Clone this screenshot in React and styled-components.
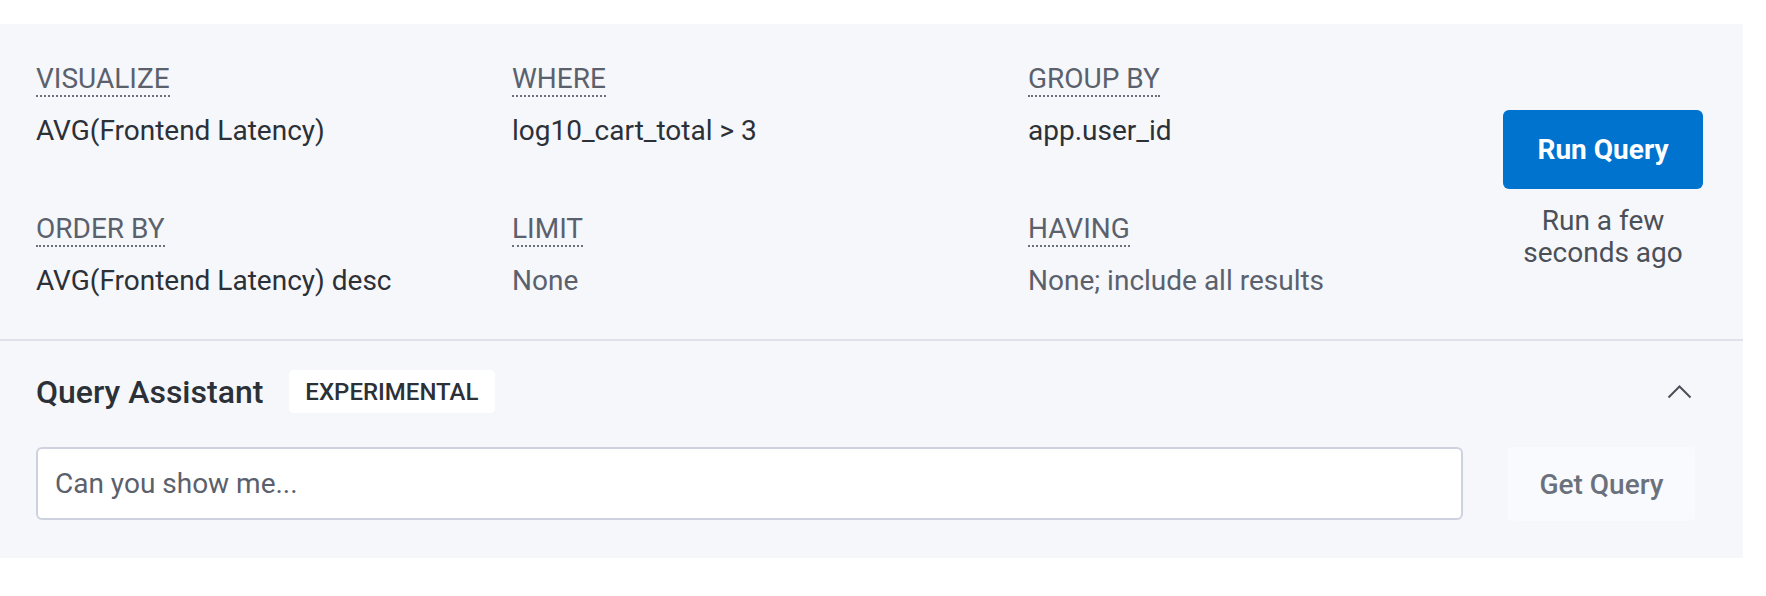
import styled, { createGlobalStyle } from "styled-components";

const GlobalStyle = createGlobalStyle`
  html, body {
    margin: 0;
    padding: 0;
    background: #ffffff;
    font-family: Roboto, "Liberation Sans", Arial, sans-serif;
  }
`

const Page = styled.div`
  padding-top: 24px;
`

const Panel = styled.div`
  width: 1743px;
  background: #f5f7fb;
`

const Upper = styled.div`
  display: grid;
  grid-template-columns: 476px 516px 475px 200px;
  grid-template-rows: auto auto;
  row-gap: 66px;
  padding: 41px 40px 40px 36px;
  border-bottom: 2px solid #dfe2e8;
`

const Field = styled.div`
  display: flex;
  flex-direction: column;
  align-items: flex-start;
`

const Label = styled.span`
  display: inline-block;
  font-size: 28px;
  line-height: 28px;
  padding-bottom: 2px;
  color: #5b616c;
  border-bottom: 2px dotted #6b717c;
`

const Value = styled.div`
  margin-top: 16px;
  font-size: 28px;
  line-height: 36px;
  color: ${(p) => (p.$muted ? "#5b616c" : "#2c3037")};
`

const RunCol = styled.div`
  grid-column: 4;
  grid-row: 1 / span 2;
  display: flex;
  flex-direction: column;
  align-items: center;
  padding-top: 45px;
`

const RunButton = styled.button`
  width: 200px;
  height: 79px;
  border: none;
  border-radius: 6px;
  background: #0073cf;
  color: #ffffff;
  font-family: inherit;
  font-size: 28px;
  font-weight: 700;
  cursor: pointer;
`

const RunNote = styled.div`
  margin-top: 16px;
  font-size: 28px;
  line-height: 32px;
  color: #4b5058;
  text-align: center;
`

const Lower = styled.div`
  padding: 29px 48px 37px 36px;
`

const HeaderRow = styled.div`
  display: flex;
  align-items: center;
  height: 43px;
`

const Title = styled.h3`
  margin: 0;
  font-size: 32px;
  font-weight: 500;
  color: #2c3037;
`

const Badge = styled.span`
  margin-left: 26px;
  height: 43px;
  display: inline-flex;
  align-items: center;
  padding: 0 17px 0 16px;
  background: #ffffff;
  border-radius: 5px;
  font-size: 24px;
  font-weight: 500;
  color: #2c3037;
`

const Collapse = styled.button`
  margin-left: auto;
  margin-right: 3px;
  background: none;
  border: none;
  padding: 0;
  display: flex;
  cursor: pointer;
`

const InputRow = styled.div`
  display: flex;
  gap: 45px;
  margin-top: 34px;
`

const Prompt = styled.input`
  flex: 1;
  height: 73px;
  box-sizing: border-box;
  border: 2px solid #cdd2de;
  border-radius: 6px;
  background: #ffffff;
  padding: 0 17px;
  font-family: inherit;
  font-size: 28px;
  color: #2c3037;
  outline: none;
  &::placeholder {
    color: #5b616c;
  }
`

const GetButton = styled.button`
  width: 187px;
  height: 74px;
  border: none;
  border-radius: 5px;
  background: #f9fafd;
  color: #6b717c;
  font-family: inherit;
  font-size: 28px;
  font-weight: 500;
`

const fields = [
  { label: "VISUALIZE", value: "AVG(Frontend Latency)" },
  { label: "WHERE", value: "log10_cart_total > 3" },
  { label: "GROUP BY", value: "app.user_id" },
  { label: "ORDER BY", value: "AVG(Frontend Latency) desc" },
  { label: "LIMIT", value: "None", muted: true },
  { label: "HAVING", value: "None; include all results", muted: true },
]

const App = () => {
  return (
    <Page>
      <GlobalStyle />
      <Panel>
        <Upper>
          {fields.slice(0, 3).map((f) => (
            <Field key={f.label}>
              <Label>{f.label}</Label>
              <Value $muted={f.muted}>{f.value}</Value>
            </Field>
          ))}
          <RunCol>
            <RunButton>Run Query</RunButton>
            <RunNote>
              Run a few
              <br />
              seconds ago
            </RunNote>
          </RunCol>
          {fields.slice(3).map((f) => (
            <Field key={f.label}>
              <Label>{f.label}</Label>
              <Value $muted={f.muted}>{f.value}</Value>
            </Field>
          ))}
        </Upper>
        <Lower>
          <HeaderRow>
            <Title>Query Assistant</Title>
            <Badge>EXPERIMENTAL</Badge>
            <Collapse aria-label="Collapse">
              <svg width="25" height="14" viewBox="0 0 25 14" fill="none">
                <path d="M1.5 12.5 L12.5 1.5 L23.5 12.5" stroke="#4b5058" strokeWidth="2" />
              </svg>
            </Collapse>
          </HeaderRow>
          <InputRow>
            <Prompt placeholder="Can you show me..." />
            <GetButton>Get Query</GetButton>
          </InputRow>
        </Lower>
      </Panel>
    </Page>
  )
}

export default App
